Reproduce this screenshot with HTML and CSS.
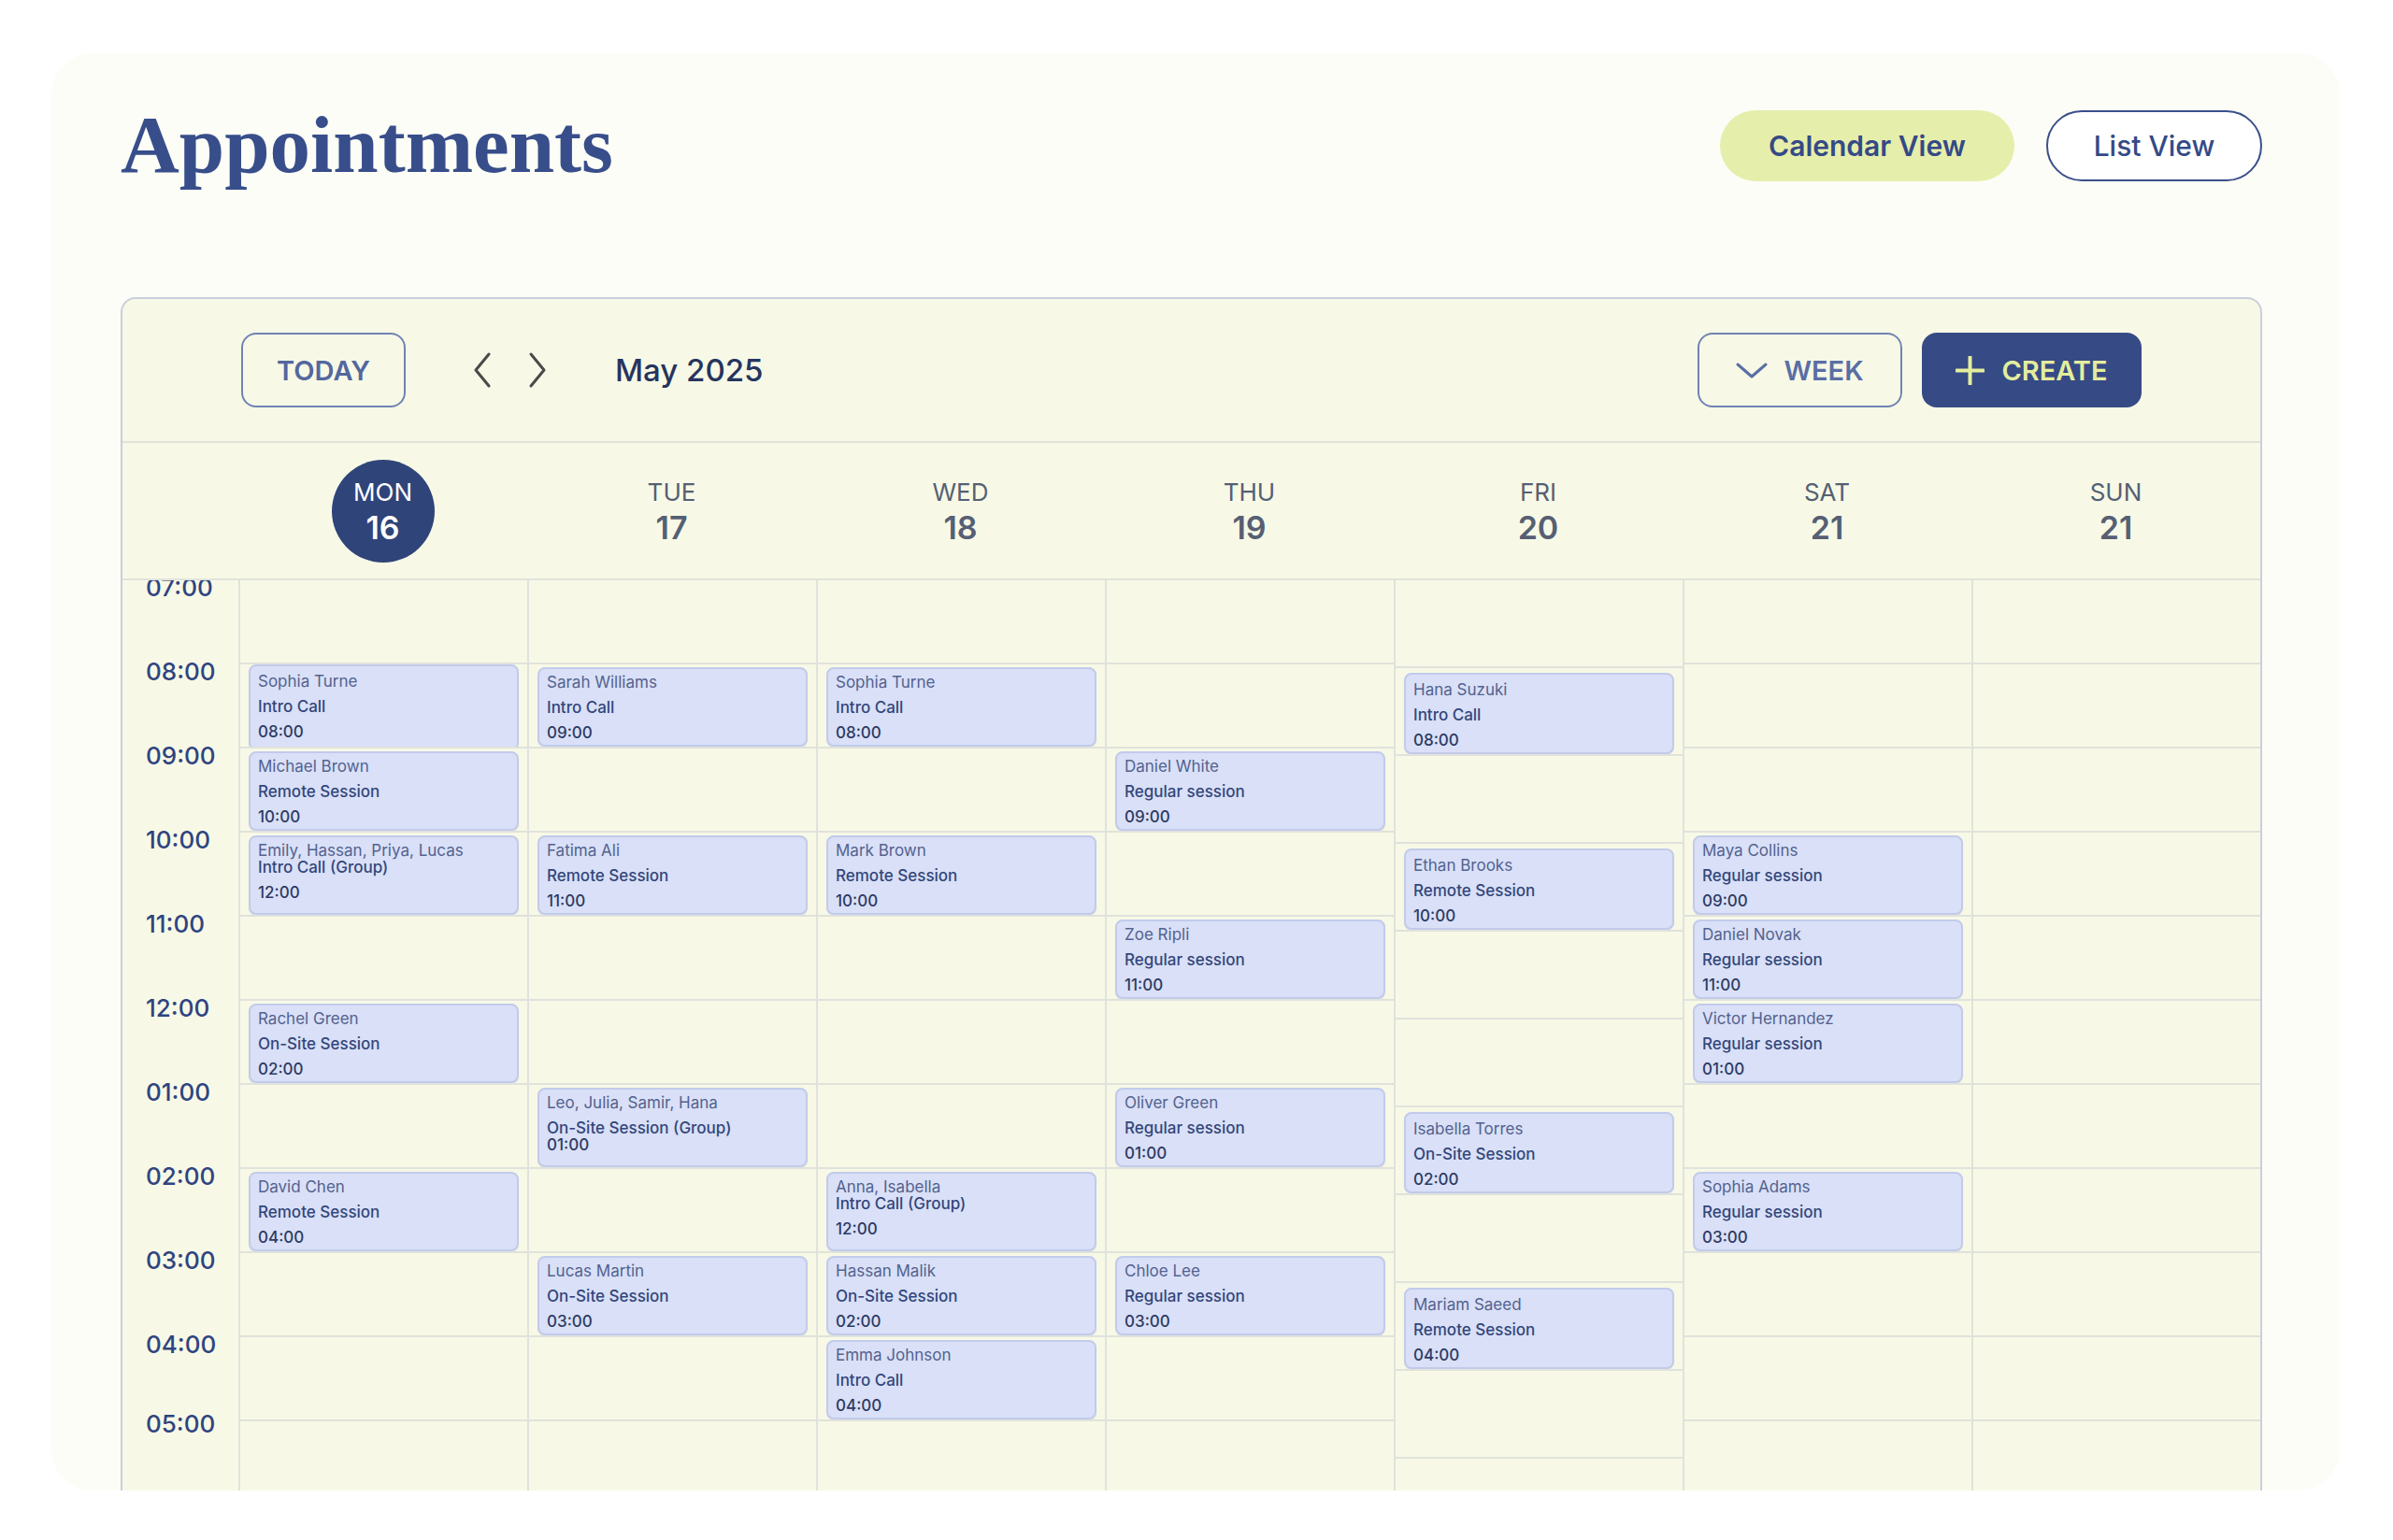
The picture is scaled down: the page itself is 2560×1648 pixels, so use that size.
FILE: index.html
```html
<!DOCTYPE html>
<html lang="en">
<head>
<meta charset="utf-8">
<title>Appointments</title>
<link rel="stylesheet" href="styles.css">
</head>
<body>
<div class="page">
  <header class="topbar">
    <h1 class="title">Appointments</h1>
    <nav class="views">
      <button class="pill pill-active">Calendar View</button>
      <button class="pill pill-outline">List View</button>
    </nav>
  </header>

  <section class="calendar">
    <div class="toolbar">
      <button class="btn btn-outline btn-today">TODAY</button>
      <div class="arrows">
        <svg class="chev" viewBox="0 0 20 40" width="20" height="40"><path d="M17 3 L3 20 L17 37"/></svg>
        <svg class="chev" viewBox="0 0 20 40" width="20" height="40"><path d="M3 3 L17 20 L3 37"/></svg>
      </div>
      <div class="month">May 2025</div>
      <div class="spacer"></div>
      <button class="btn btn-outline btn-week"><svg class="chev-down" viewBox="0 0 34 17" width="34" height="17"><path d="M2 2 L17 15 L32 2"/></svg>WEEK</button>
      <button class="btn btn-create"><svg class="plus" viewBox="0 0 31 31" width="31" height="31"><path d="M15.5 1 V30 M1 15.5 H30"/></svg>CREATE</button>
    </div>

    <div class="dayhead">
      <div></div>
      <div class="day"><div class="today"><span class="dname">MON</span><span class="dnum">16</span></div></div>
      <div class="day"><span class="dname">TUE</span><span class="dnum">17</span></div>
      <div class="day"><span class="dname">WED</span><span class="dnum">18</span></div>
      <div class="day"><span class="dname">THU</span><span class="dnum">19</span></div>
      <div class="day"><span class="dname">FRI</span><span class="dnum">20</span></div>
      <div class="day"><span class="dname">SAT</span><span class="dnum">21</span></div>
      <div class="day"><span class="dname">SUN</span><span class="dnum">21</span></div>
    </div>

    <div class="grid">
      <div class="times">
        <div class="tcell"><span class="tlabel">07:00</span></div>
        <div class="tcell"><span class="tlabel">08:00</span></div>
        <div class="tcell"><span class="tlabel">09:00</span></div>
        <div class="tcell"><span class="tlabel">10:00</span></div>
        <div class="tcell"><span class="tlabel">11:00</span></div>
        <div class="tcell"><span class="tlabel">12:00</span></div>
        <div class="tcell"><span class="tlabel">01:00</span></div>
        <div class="tcell"><span class="tlabel">02:00</span></div>
        <div class="tcell"><span class="tlabel">03:00</span></div>
        <div class="tcell"><span class="tlabel">04:00</span></div>
        <div class="tcell tcell-last"><span class="tlabel">05:00</span></div>
      </div>

      <!-- MON -->
      <div class="col">
        <div class="cell"></div>
        <div class="cell"><div class="ev ev-clip"><div class="name">Sophia Turne</div><div class="type">Intro Call</div><div class="time">08:00</div></div></div>
        <div class="cell"><div class="ev"><div class="name">Michael Brown</div><div class="type">Remote Session</div><div class="time">10:00</div></div></div>
        <div class="cell"><div class="ev"><div class="name">Emily, Hassan, Priya, Lucas</div><div class="type tight">Intro Call (Group)</div><div class="time">12:00</div></div></div>
        <div class="cell"></div>
        <div class="cell"><div class="ev"><div class="name">Rachel Green</div><div class="type">On-Site Session</div><div class="time">02:00</div></div></div>
        <div class="cell"></div>
        <div class="cell"><div class="ev"><div class="name">David Chen</div><div class="type">Remote Session</div><div class="time">04:00</div></div></div>
        <div class="cell"></div>
        <div class="cell"></div>
        <div class="cell"></div>
      </div>

      <!-- TUE -->
      <div class="col">
        <div class="cell"></div>
        <div class="cell"><div class="ev"><div class="name">Sarah Williams</div><div class="type">Intro Call</div><div class="time">09:00</div></div></div>
        <div class="cell"></div>
        <div class="cell"><div class="ev"><div class="name">Fatima Ali</div><div class="type">Remote Session</div><div class="time">11:00</div></div></div>
        <div class="cell"></div>
        <div class="cell"></div>
        <div class="cell"><div class="ev"><div class="name">Leo, Julia, Samir, Hana</div><div class="type">On-Site Session (Group)</div><div class="time tight">01:00</div></div></div>
        <div class="cell"></div>
        <div class="cell"><div class="ev"><div class="name">Lucas Martin</div><div class="type">On-Site Session</div><div class="time">03:00</div></div></div>
        <div class="cell"></div>
        <div class="cell"></div>
      </div>

      <!-- WED -->
      <div class="col">
        <div class="cell"></div>
        <div class="cell"><div class="ev"><div class="name">Sophia Turne</div><div class="type">Intro Call</div><div class="time">08:00</div></div></div>
        <div class="cell"></div>
        <div class="cell"><div class="ev"><div class="name">Mark Brown</div><div class="type">Remote Session</div><div class="time">10:00</div></div></div>
        <div class="cell"></div>
        <div class="cell"></div>
        <div class="cell"></div>
        <div class="cell"><div class="ev"><div class="name">Anna, Isabella</div><div class="type tight">Intro Call (Group)</div><div class="time">12:00</div></div></div>
        <div class="cell"><div class="ev"><div class="name">Hassan Malik</div><div class="type">On-Site Session</div><div class="time">02:00</div></div></div>
        <div class="cell"><div class="ev"><div class="name">Emma Johnson</div><div class="type">Intro Call</div><div class="time">04:00</div></div></div>
        <div class="cell"></div>
      </div>

      <!-- THU -->
      <div class="col">
        <div class="cell"></div>
        <div class="cell"></div>
        <div class="cell"><div class="ev"><div class="name">Daniel White</div><div class="type">Regular session</div><div class="time">09:00</div></div></div>
        <div class="cell"></div>
        <div class="cell"><div class="ev"><div class="name">Zoe Ripli</div><div class="type">Regular session</div><div class="time">11:00</div></div></div>
        <div class="cell"></div>
        <div class="cell"><div class="ev"><div class="name">Oliver Green</div><div class="type">Regular session</div><div class="time">01:00</div></div></div>
        <div class="cell"></div>
        <div class="cell"><div class="ev"><div class="name">Chloe Lee</div><div class="type">Regular session</div><div class="time">03:00</div></div></div>
        <div class="cell"></div>
        <div class="cell"></div>
      </div>

      <!-- FRI -->
      <div class="col col-fri">
        <div class="cell"></div>
        <div class="cell"><div class="ev"><div class="name">Hana Suzuki</div><div class="type">Intro Call</div><div class="time">08:00</div></div></div>
        <div class="cell"></div>
        <div class="cell"><div class="ev"><div class="name">Ethan Brooks</div><div class="type">Remote Session</div><div class="time">10:00</div></div></div>
        <div class="cell"></div>
        <div class="cell"></div>
        <div class="cell"><div class="ev"><div class="name">Isabella Torres</div><div class="type">On-Site Session</div><div class="time">02:00</div></div></div>
        <div class="cell"></div>
        <div class="cell"><div class="ev"><div class="name">Mariam Saeed</div><div class="type">Remote Session</div><div class="time">04:00</div></div></div>
        <div class="cell"></div>
        <div class="cell"></div>
      </div>

      <!-- SAT -->
      <div class="col">
        <div class="cell"></div>
        <div class="cell"></div>
        <div class="cell"></div>
        <div class="cell"><div class="ev"><div class="name">Maya Collins</div><div class="type">Regular session</div><div class="time">09:00</div></div></div>
        <div class="cell"><div class="ev"><div class="name">Daniel Novak</div><div class="type">Regular session</div><div class="time">11:00</div></div></div>
        <div class="cell"><div class="ev"><div class="name">Victor Hernandez</div><div class="type">Regular session</div><div class="time">01:00</div></div></div>
        <div class="cell"></div>
        <div class="cell"><div class="ev"><div class="name">Sophia Adams</div><div class="type">Regular session</div><div class="time">03:00</div></div></div>
        <div class="cell"></div>
        <div class="cell"></div>
        <div class="cell"></div>
      </div>

      <!-- SUN -->
      <div class="col">
        <div class="cell"></div>
        <div class="cell"></div>
        <div class="cell"></div>
        <div class="cell"></div>
        <div class="cell"></div>
        <div class="cell"></div>
        <div class="cell"></div>
        <div class="cell"></div>
        <div class="cell"></div>
        <div class="cell"></div>
        <div class="cell"></div>
      </div>
    </div>
  </section>
</div>
</body>
</html>
```

FILE: styles.css
```css
* { box-sizing: border-box; }

html, body {
  margin: 0;
  background: #ffffff;
}

body {
  font-family: Inter, "Liberation Sans", sans-serif;
}

.page {
  margin: 57px 57px 0 55px;
  height: 1538px;
  padding: 61px 83px 0 74px;
  background: #fcfdf6;
  border-radius: 44px;
  overflow: hidden;
}

/* ---------- top bar ---------- */
.topbar {
  display: flex;
  align-items: center;
  justify-content: space-between;
  height: 76px;
}

.title {
  margin: -2px 0 0 0;
  font-family: "Liberation Serif", serif;
  font-weight: 700;
  font-size: 87px;
  line-height: 86px;
  color: #384e8b;
}

.views {
  display: flex;
  gap: 34px;
}

.pill {
  height: 76px;
  border-radius: 38px;
  font-family: Inter, "Liberation Sans", sans-serif;
  font-size: 30px;
  font-weight: 600;
  color: #344a86;
  display: flex;
  align-items: center;
  justify-content: center;
  padding: 0;
}

.pill-active {
  width: 315px;
  background: #e6eeab;
  border: none;
}

.pill-outline {
  width: 231px;
  background: #ffffff;
  border: 2px solid #3a4f8b;
  font-weight: 500;
}

/* ---------- calendar card ---------- */
.calendar {
  margin-top: 124px;
  border: 2px solid #c8cfdc;
  border-radius: 16px;
  background: #f7f9e6;
}

.toolbar {
  height: 154px;
  border-bottom: 2px solid #e0e2dc;
  display: flex;
  align-items: center;
  padding: 0 127px;
}

.btn {
  height: 80px;
  border-radius: 16px;
  font-family: Inter, "Liberation Sans", sans-serif;
  font-size: 29px;
  font-weight: 600;
  display: flex;
  align-items: center;
  justify-content: center;
  padding: 0;
}

.btn-outline {
  background: transparent;
  border: 2px solid #7083b4;
  color: #53679f;
}

.btn-today { width: 176px; }

.btn-week {
  width: 219px;
  gap: 17px;
  color: #5a6ea5;
}

.btn-create {
  width: 235px;
  margin-left: 21px;
  gap: 18px;
  background: #364a85;
  border: none;
  color: #e4ed9d;
}

.arrows {
  display: flex;
  gap: 39px;
  margin: 0 73px 0 72px;
}

.chev path {
  fill: none;
  stroke: #4a4a4a;
  stroke-width: 3;
  stroke-linecap: round;
  stroke-linejoin: round;
}

.chev-down path {
  fill: none;
  stroke: #5a6ea5;
  stroke-width: 3;
  stroke-linecap: round;
  stroke-linejoin: round;
}

.plus path {
  fill: none;
  stroke: #e4ed9d;
  stroke-width: 4;
  stroke-linecap: round;
}

.month {
  font-size: 33px;
  font-weight: 500;
  color: #26345f;
}

.spacer { flex: 1; }

/* ---------- day header ---------- */
.dayhead {
  display: grid;
  grid-template-columns: 124px repeat(7, 1fr);
  height: 147px;
  border-bottom: 2px solid #e0e2dc;
}

.day {
  display: flex;
  flex-direction: column;
  align-items: center;
  justify-content: center;
  padding-top: 3px;
  color: #565f74;
}

.dname {
  font-size: 26px;
  line-height: 30px;
  font-weight: 400;
}

.dnum {
  font-size: 34px;
  line-height: 40px;
  font-weight: 600;
  margin-top: 3px;
}

.today {
  width: 110px;
  height: 110px;
  margin-top: -3px;
  padding-top: 3px;
  border-radius: 50%;
  background: #2f4479;
  color: #ffffff;
  display: flex;
  flex-direction: column;
  align-items: center;
  justify-content: center;
}

/* ---------- grid body ---------- */
.grid {
  display: grid;
  grid-template-columns: 124px repeat(7, 1fr);
  align-items: start;
  overflow: hidden;
}

.tcell {
  height: 90px;
  display: flex;
  align-items: flex-start;
  padding-left: 25px;
}

.tlabel {
  margin-top: -5px;
  font-size: 26px;
  line-height: 26px;
  font-weight: 500;
  color: #2f4480;
}

.tcell-last .tlabel { margin-top: -10px; }

.col {
  border-left: 2px solid #e0e2dc;
}

.cell {
  height: 90px;
  border-bottom: 2px solid #e0e2dc;
  padding: 3px 9px 0;
  overflow: hidden;
}

.col-fri .cell {
  height: 94px;
  padding-top: 5px;
}

.ev {
  height: 85px;
  background: #d9e0f7;
  border: 2px solid #c2cbea;
  border-radius: 8px;
  padding: 1px 8px 0;
  font-size: 17px;
  line-height: 27px;
  white-space: nowrap;
  box-shadow: 0 1px 1px rgba(70, 85, 140, 0.12);
}

.col-fri .ev {
  height: 87px;
  padding-top: 3px;
}

.ev-clip {
  margin-top: -3px;
  height: 92px;
  padding-top: 3px;
}

.name {
  color: #53628f;
  font-weight: 400;
}

.type {
  color: #33467b;
  font-weight: 500;
}

.time {
  color: #2d3a63;
  font-weight: 500;
}

.tight { margin-top: -9px; }
```
